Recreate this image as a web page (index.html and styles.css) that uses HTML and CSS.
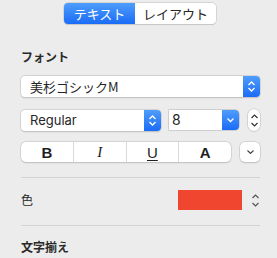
FILE: index.html
```html
<!DOCTYPE html>
<html lang="ja">
<head>
    <meta charset="UTF-8">
    <title>テキスト</title>
    <link rel="stylesheet" href="styles.css">
</head>
<body>

<div class="panel">
    <div class="tabs">
        <div class="tab active">テキスト</div>
        <div class="tab">レイアウト</div>
    </div>

    <div class="label first">フォント</div>

    <div class="popup wide">
        <span class="value">美杉ゴシックM</span>
        <span class="arrows">
            <svg width="9" height="13" viewBox="0 0 9 13"><path d="M1.5 5 L4.5 2 L7.5 5 M1.5 8 L4.5 11 L7.5 8" fill="none" stroke="#fff" stroke-width="1.3"/></svg>
        </span>
    </div>

    <div class="row">
        <div class="popup style">
            <span class="value">Regular</span>
            <span class="arrows">
                <svg width="9" height="13" viewBox="0 0 9 13"><path d="M1.5 5 L4.5 2 L7.5 5 M1.5 8 L4.5 11 L7.5 8" fill="none" stroke="#fff" stroke-width="1.3"/></svg>
            </span>
        </div>
        <div class="combo">
            <span class="field">8</span>
            <span class="arrows">
                <svg width="9" height="6" viewBox="0 0 9 6"><path d="M1.5 1.5 L4.5 4.5 L7.5 1.5" fill="none" stroke="#fff" stroke-width="1.3"/></svg>
            </span>
        </div>
        <div class="stepper">
            <svg width="9" height="15" viewBox="0 0 9 15"><path d="M1.5 5 L4.5 2 L7.5 5 M1.5 10 L4.5 13 L7.5 10" fill="none" stroke="#333" stroke-width="1.2"/></svg>
        </div>
    </div>

    <div class="row tools">
        <div class="styles">
            <div class="seg bold">B</div>
            <div class="seg italic">I</div>
            <div class="seg under">U</div>
            <div class="seg bold">A</div>
        </div>
        <div class="more">
            <svg width="9" height="6" viewBox="0 0 9 6"><path d="M1.5 1.5 L4.5 4.5 L7.5 1.5" fill="none" stroke="#444" stroke-width="1.2"/></svg>
        </div>
    </div>

    <div class="sep"></div>

    <div class="color-row">
        <span class="label">色</span>
        <span class="well"></span>
        <span class="chev">
            <svg width="9" height="15" viewBox="0 0 9 15"><path d="M1.5 5 L4.5 2 L7.5 5 M1.5 10 L4.5 13 L7.5 10" fill="none" stroke="#555" stroke-width="1.2"/></svg>
        </span>
    </div>

    <div class="sep"></div>

    <div class="label">文字揃え</div>
</div>

</body>
</html>
```

FILE: styles.css
```css
body {
    margin: 0;
    background-color: #ececec;
    font-family: "Noto Sans CJK JP", "Liberation Sans", sans-serif;
    color: #262626;
    font-size: 13px;
}
.panel {
    width: 277px;
    height: 258px;
    padding: 3px 17px 0 21px;
    box-sizing: border-box;
    display: flex;
    flex-direction: column;
    overflow: hidden;
}
.tabs {
    display: flex;
    align-self: flex-start;
    margin-left: 43px;
    height: 21px;
    border-radius: 4px;
    background-color: white;
    box-shadow: 0 0 0 0.5px #c2c2c2, 0 0.5px 1px rgba(0, 0, 0, 0.15);
    overflow: hidden;
}
.tab {
    display: flex;
    align-items: center;
    justify-content: center;
    font-size: 13px;
    color: #262626;
}
.tab:first-child {
    width: 71px;
}
.tab:last-child {
    width: 81px;
}
.tab.active {
    background: linear-gradient(#4f9dfb, #1a6cf6);
    color: white;
}
.label {
    font-size: 12px;
    font-weight: bold;
    line-height: 16px;
    color: #2a2a2a;
}
.label.first {
    margin-top: 25px;
}
.popup, .combo, .stepper, .more, .styles {
    background-color: white;
    border-radius: 4px;
    box-shadow: 0 0 0 0.5px #c4c4c4, 0 0.5px 1.5px rgba(0, 0, 0, 0.2);
    display: flex;
    align-items: center;
    box-sizing: border-box;
}
.popup {
    height: 21px;
    justify-content: space-between;
    overflow: hidden;
}
.popup.wide {
    margin-top: 11px;
}
.popup .value {
    padding-left: 9px;
    font-size: 13px;
}
.popup.style .value {
    font-family: Inter, "Liberation Sans", sans-serif;
    font-size: 13px;
}
.arrows {
    width: 17px;
    height: 100%;
    background: linear-gradient(#4f9dfb, #1a6cf6);
    display: flex;
    align-items: center;
    justify-content: center;
}
.row {
    display: flex;
    align-items: center;
    margin-top: 12px;
}
.row.tools {
    margin-top: 10px;
}
.popup.style {
    width: 140px;
}
.combo {
    margin-left: 8px;
    width: 70px;
    height: 20px;
    border-radius: 0 4px 4px 0;
    overflow: hidden;
    justify-content: space-between;
    box-shadow: 0 0 0 0.5px #b0b0b0;
}
.combo .field {
    padding-left: 3px;
    font-family: Inter, "Liberation Sans", sans-serif;
    font-size: 14px;
    line-height: 20px;
}
.stepper {
    margin-left: 9px;
    width: 12px;
    height: 22px;
    border-radius: 6px;
    justify-content: center;
}
.styles {
    width: 210px;
    height: 20px;
    margin-top: 1px;
    border-radius: 5px;
}
.seg {
    flex: 1;
    height: 100%;
    display: flex;
    align-items: center;
    justify-content: center;
    border-left: 1px solid #dadada;
    font-family: "Liberation Sans", sans-serif;
    font-size: 15px;
    color: #1f1f1f;
}
.seg:first-child {
    border-left: none;
}
.seg.bold {
    font-weight: bold;
}
.seg.italic {
    font-family: "Liberation Serif", serif;
    font-style: italic;
    font-size: 15px;
}
.seg.under {
    text-decoration: underline;
    text-underline-offset: 2px;
}
.more {
    margin-left: 9px;
    margin-top: 1px;
    width: 20px;
    height: 20px;
    justify-content: center;
    border-radius: 5px;
}
.sep {
    height: 1px;
    background-color: #d4d4d4;
    margin-top: 15px;
}
.color-row {
    display: flex;
    align-items: center;
    margin-top: 12px;
    height: 20px;
}
.color-row .label {
    flex: 1;
    font-weight: normal;
    font-size: 12px;
}
.well {
    width: 64px;
    height: 20px;
    background-color: #f0452f;
}
.chev {
    width: 18px;
    display: flex;
    justify-content: flex-end;
}
.color-row + .sep {
    margin-top: 15px;
}
.sep + .label {
    margin-top: 13px;
}
```
